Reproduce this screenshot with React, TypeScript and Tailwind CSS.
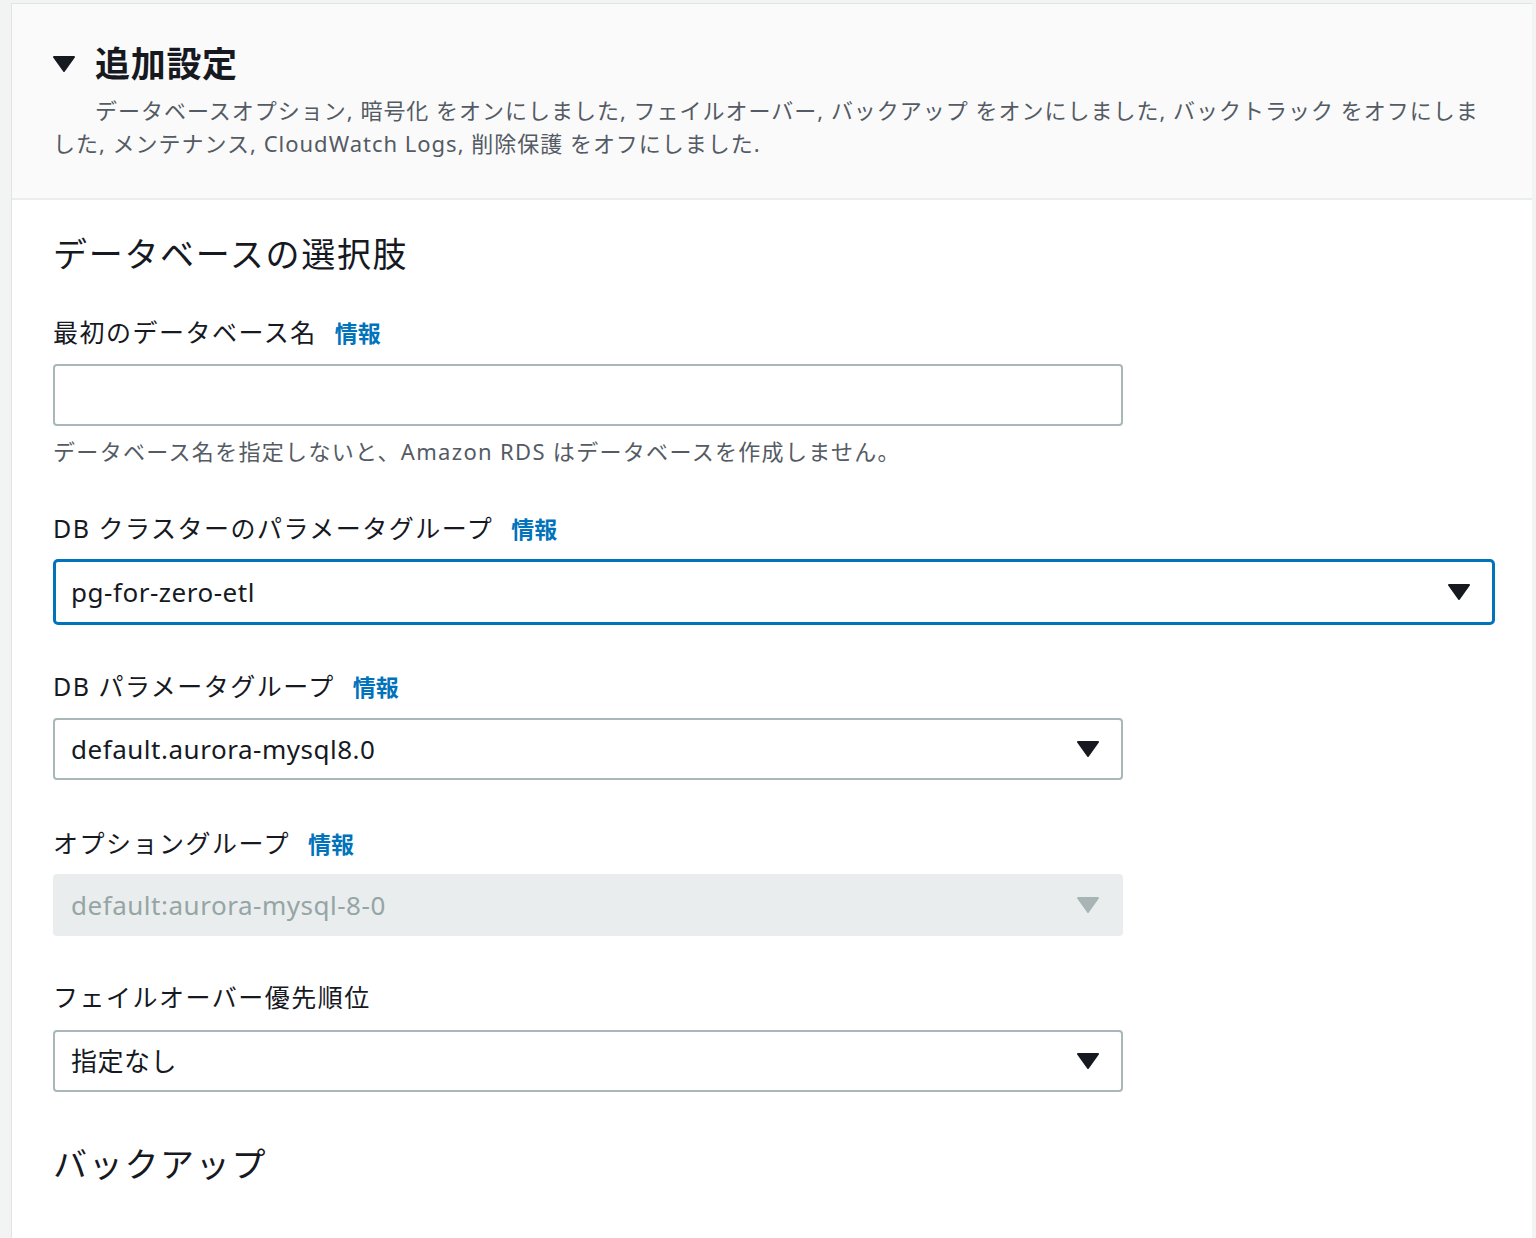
import React from "react";

const Caret = ({ c = "#16191f" }: { c?: string }) => (
  <svg width="22" height="16" viewBox="0 0 22 16"><path d="M1 1 L21 1 L11 15 Z" fill={c} stroke={c} strokeWidth="2" strokeLinejoin="round" /></svg>
);

const Label = ({ t, info = true, mt }: { t: string; info?: boolean; mt: string }) => (
  <div className={`flex items-center h-[36px] text-[25px] tracking-[0.06em] text-[#16191f] ${mt}`}>
    <span>{t}</span>
    {info && <span className="ml-[18px] text-[23px] tracking-normal font-bold text-[#0073bb]">情報</span>}
  </div>
);

const Select = ({ v, w = "w-[1070px]", mt }: { v: string; w?: string; mt: string }) => (
  <div className={`${w} ${mt} h-[62px] border-2 border-[#aab7b8] rounded-[4px] bg-white flex items-center justify-between pl-[16px] pr-[22px] text-[26px] tracking-[0.02em] text-[#16191f]`}>
    <span>{v}</span>
    <Caret />
  </div>
);

export default function App() {
  return (
    <div className="min-h-[1238px] bg-[#f2f3f3] pl-[11px] pr-[4px] pt-[3px]" style={{ fontFamily: '"Noto Sans", "Noto Sans CJK JP", sans-serif' }}>
      <div className="bg-white border-l border-t border-[#e1e4e4] min-h-[1235px]">
        <div className="bg-[#fafafa] border-b-2 border-[#eaeded] h-[196px] pl-[41px] pr-[40px] pt-[38px]">
          <div className="flex items-center h-[44px]">
            <svg width="22" height="16" viewBox="0 0 22 16"><path d="M1 1 L21 1 L11 15 Z" fill="#16191f" stroke="#16191f" strokeWidth="2" strokeLinejoin="round" /></svg>
            <span className="ml-[20px] text-[35px] tracking-[0.02em] font-bold text-[#16191f]">追加設定</span>
          </div>
          <p className="mt-[8px] text-[22px] leading-[33px] tracking-[0.045em] text-[#545b64] indent-[42px]">
            データベースオプション, 暗号化 をオンにしました, フェイルオーバー, バックアップ をオンにしました, バックトラック をオフにしました, メンテナンス, CloudWatch Logs, 削除保護 をオフにしました.
          </p>
        </div>
        <div className="pl-[41px]">
          <div className="mt-[30px] h-[48px] flex items-center text-[34px] tracking-[0.05em] text-[#16191f]">データベースの選択肢</div>
          <Label t="最初のデータベース名" mt="mt-[37px]" />
          <div className="mt-[13px] w-[1070px] h-[62px] border-2 border-[#aab7b8] rounded-[4px] bg-white" />
          <div className="mt-[10px] h-[30px] flex items-center text-[22px] tracking-[0.06em] text-[#545b64]">データベース名を指定しないと、Amazon RDS はデータベースを作成しません。</div>
          <Label t="DB クラスターのパラメータグループ" mt="mt-[45px]" />
          <div className="mt-[12px] w-[1442px] h-[66px] border-[3px] border-[#0073bb] rounded-[5px] bg-white flex items-center justify-between pl-[15px] pr-[22px] text-[26px] tracking-[0.02em] text-[#16191f]">
            <span>pg-for-zero-etl</span>
            <Caret />
          </div>
          <Label t="DB パラメータグループ" mt="mt-[44px]" />
          <Select v="default.aurora-mysql8.0" mt="mt-[13px]" />
          <Label t="オプショングループ" mt="mt-[46px]" />
          <div className="mt-[12px] w-[1070px] h-[62px] rounded-[4px] bg-[#eaeded] flex items-center justify-between pl-[18px] pr-[24px] text-[26px] tracking-[0.02em] text-[#95a5a6]">
            <span>default:aurora-mysql-8-0</span>
            <Caret c="#a9b4b5" />
          </div>
          <Label t="フェイルオーバー優先順位" info={false} mt="mt-[44px]" />
          <Select v="指定なし" mt="mt-[14px]" />
          <div className="mt-[48px] h-[48px] flex items-center text-[34px] tracking-[0.05em] text-[#16191f]">バックアップ</div>
        </div>
      </div>
    </div>
  );
}
